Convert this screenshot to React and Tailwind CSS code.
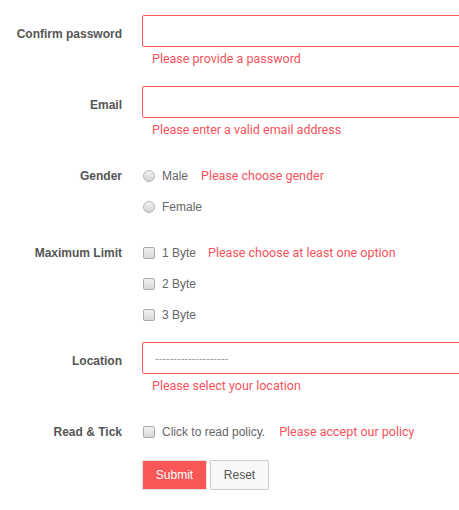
import React from "react";

const Radio = () => (
  <span className="inline-block w-[12px] h-[12px] rounded-full border border-[#b5b5b5] bg-gradient-to-b from-[#f2f2f2] to-[#d4d4d4] mr-[7px] shrink-0" />
);
const Check = () => (
  <span className="inline-block w-[12px] h-[12px] rounded-[2px] border border-[#ababab] bg-gradient-to-b from-[#f0f0f0] to-[#d8d8d8] mr-[7px] shrink-0" />
);

const Label = ({ children }) => (
  <div className="w-[122px] shrink-0 text-right font-bold text-[12px] text-[#555] pr-0">{children}</div>
);

const Err = ({ children, className = "" }) => (
  <span className={"text-[12.5px] text-[#f5535c] leading-[16px] " + className} style={{ fontFamily: "Roboto, sans-serif" }}>
    {children}
  </span>
);

export default function App() {
  return (
    <div className="w-[459px] h-[510px] overflow-hidden bg-white" style={{ fontFamily: '"Liberation Sans", Arial, sans-serif' }}>
      <div className="pt-[15px] w-[700px]">
        {/* Confirm password */}
        <div className="flex items-center">
          <Label><div className="pt-[5px]">Confirm password</div></Label>
          <div className="ml-[20px] w-[340px] h-[32px] border border-[#f55656] rounded-[2px]" />
        </div>
        <div className="ml-[152px] mt-[4px] h-[16px] flex items-center">
          <Err>Please provide a password</Err>
        </div>

        {/* Email */}
        <div className="flex items-center mt-[19px]">
          <Label><div className="pt-[5px]">Email</div></Label>
          <div className="ml-[20px] w-[340px] h-[32px] border border-[#f55656] rounded-[2px]" />
        </div>
        <div className="ml-[152px] mt-[4px] h-[16px] flex items-center">
          <Err>Please enter a valid email address</Err>
        </div>

        {/* Gender */}
        <div className="flex items-start mt-[28px]">
          <Label><div className="h-[20px] leading-[20px]">Gender</div></Label>
          <div className="ml-[21px] flex flex-col gap-[11px]">
            <div className="h-[20px] flex items-center text-[12px] text-[#666]">
              <Radio />
              <span>Male</span>
              <Err className="ml-[13px]">Please choose gender</Err>
            </div>
            <div className="h-[20px] flex items-center text-[12px] text-[#666]">
              <Radio />
              <span>Female</span>
            </div>
          </div>
        </div>

        {/* Maximum Limit */}
        <div className="flex items-start mt-[26px]">
          <Label><div className="h-[20px] leading-[20px]">Maximum Limit</div></Label>
          <div className="ml-[21px] flex flex-col gap-[11px]">
            <div className="h-[20px] flex items-center text-[12px] text-[#666]">
              <Check />
              <span>1 Byte</span>
              <Err className="ml-[12px]">Please choose at least one option</Err>
            </div>
            <div className="h-[20px] flex items-center text-[12px] text-[#666]">
              <Check />
              <span>2 Byte</span>
            </div>
            <div className="h-[20px] flex items-center text-[12px] text-[#666]">
              <Check />
              <span>3 Byte</span>
            </div>
          </div>
        </div>

        {/* Location */}
        <div className="flex items-center mt-[17px]">
          <Label><div className="pt-[5px]">Location</div></Label>
          <div className="ml-[20px] w-[340px] h-[32px] border border-[#f55656] rounded-[2px] flex items-center pl-[12px] text-[11px] text-[#999]">
            --------------------
          </div>
        </div>
        <div className="ml-[152px] mt-[4px] h-[16px] flex items-center">
          <Err>Please select your location</Err>
        </div>

        {/* Read & Tick */}
        <div className="flex items-center mt-[28px] h-[20px]">
          <Label>Read &amp; Tick</Label>
          <div className="ml-[21px] flex items-center text-[12px] text-[#666]">
            <Check />
            <span>Click to read policy.</span>
            <Err className="ml-[14px]">Please accept our policy</Err>
          </div>
        </div>

        {/* Buttons */}
        <div className="flex mt-[18px] ml-[142px] gap-[3px]">
          <button className="w-[65px] h-[30px] bg-[#f85657] border border-[#e0e0e0] text-white text-[12px] rounded-[1px]">Submit</button>
          <button className="w-[59px] h-[30px] bg-[#f8f8f8] border border-[#cccccc] text-[#555] text-[12px] rounded-[1px]">Reset</button>
        </div>
      </div>
    </div>
  );
}
